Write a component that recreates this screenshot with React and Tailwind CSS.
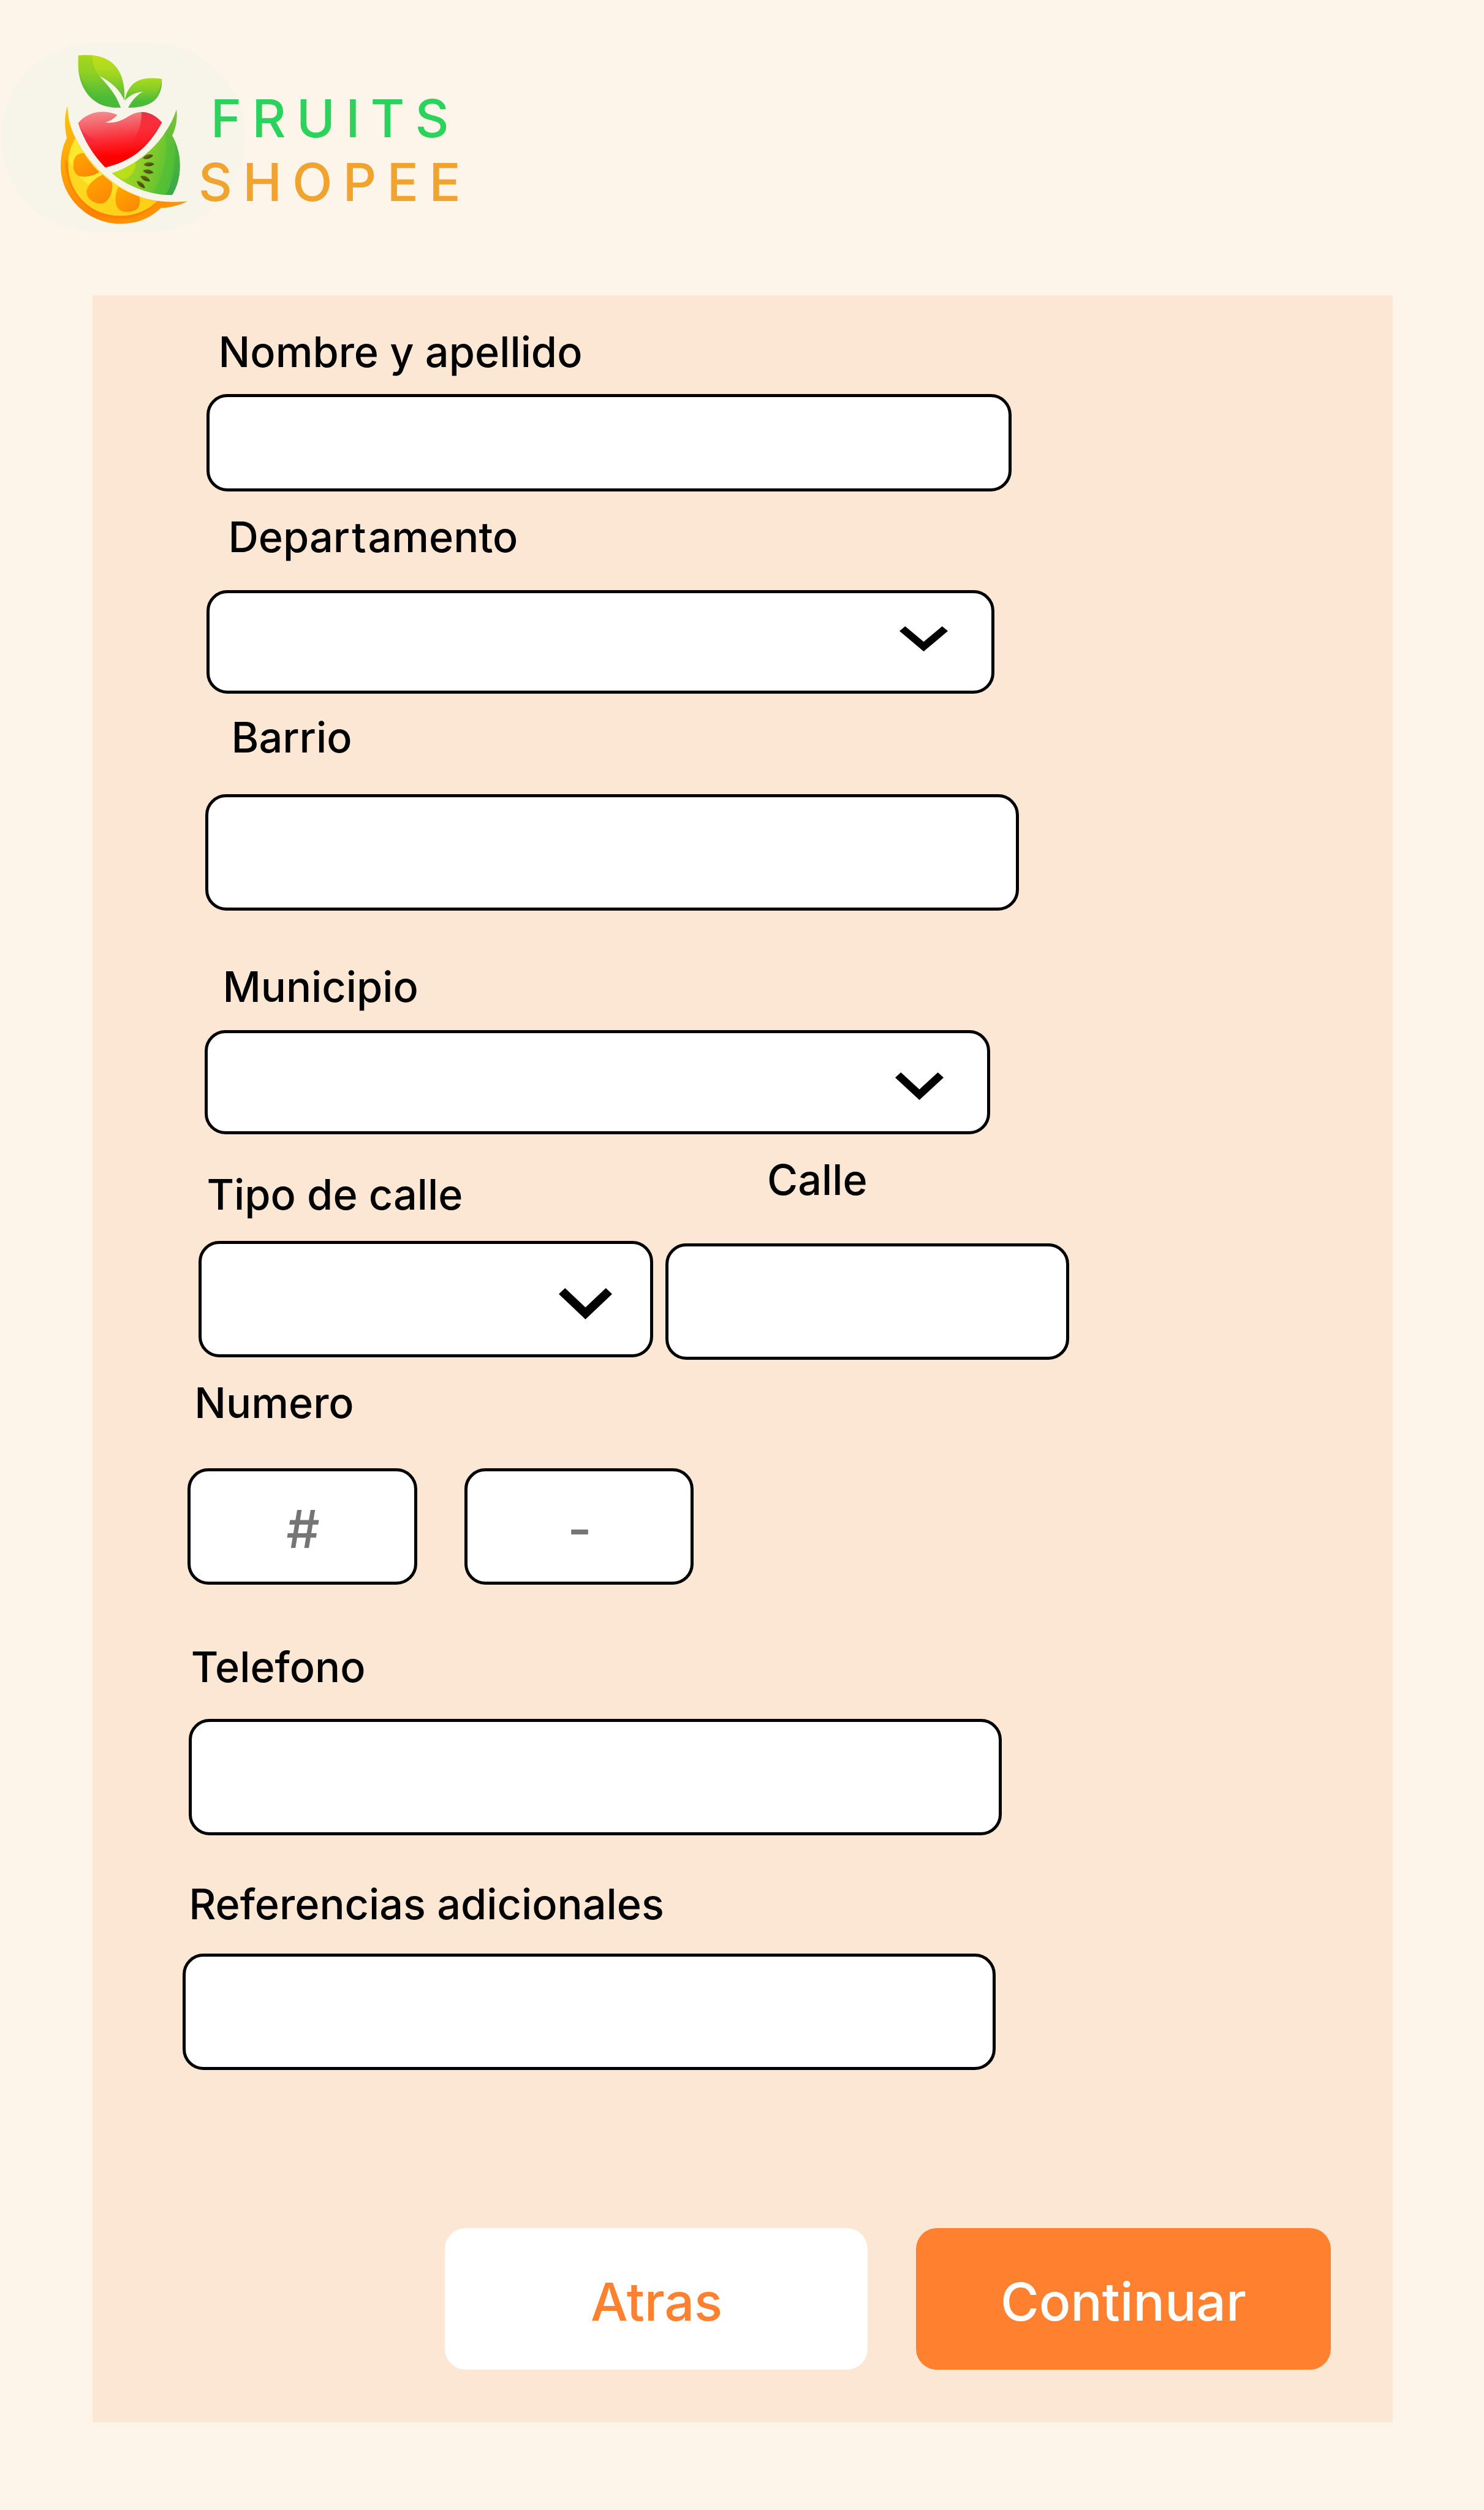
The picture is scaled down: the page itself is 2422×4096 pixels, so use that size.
import React from "react";

const seeds = [
  [847, 719, -13],
  [853, 762, 0],
  [849, 804, 14],
  [832, 844, 31],
  [807, 878, 44],
];

function FruitLogo() {
  return (
    <svg viewBox="330 120 760 1000" className="h-[285px] w-[217px] shrink-0" aria-hidden="true">
      <defs>
        <linearGradient id="leaf" x1="0" y1="0" x2="0" y2="1">
          <stop offset="0" stopColor="#a9d71e" />
          <stop offset="0.35" stopColor="#8fcf25" />
          <stop offset="0.8" stopColor="#4bbb38" />
          <stop offset="1" stopColor="#48b93a" />
        </linearGradient>
        <linearGradient id="leafLight" x1="0" y1="0" x2="0" y2="1">
          <stop offset="0" stopColor="#c3e018" />
          <stop offset="0.35" stopColor="#aad91f" />
          <stop offset="1" stopColor="#4fbc38" />
        </linearGradient>
        <linearGradient id="smallLeafLight" x1="0" y1="0" x2="0" y2="1">
          <stop offset="0" stopColor="#b4dc1a" />
          <stop offset="1" stopColor="#7ccb2b" />
        </linearGradient>
        <linearGradient id="leafShade" x1="0" y1="0" x2="0" y2="1">
          <stop offset="0" stopColor="#6fc62f" stopOpacity="0.5" />
          <stop offset="1" stopColor="#3fb53c" />
        </linearGradient>
        <linearGradient id="apple" x1="0.4" y1="0" x2="0.55" y2="1">
          <stop offset="0" stopColor="#f28b8f" />
          <stop offset="0.22" stopColor="#f4636a" />
          <stop offset="0.5" stopColor="#fb2a33" />
          <stop offset="0.78" stopColor="#ff0000" />
        </linearGradient>
        <linearGradient id="appleSide" x1="0" y1="0" x2="0" y2="1">
          <stop offset="0" stopColor="#dc2440" />
          <stop offset="0.3" stopColor="#fa2634" />
          <stop offset="1" stopColor="#ff0a0e" stopOpacity="0" />
        </linearGradient>
        <linearGradient id="peel" x1="0.1" y1="0" x2="0.5" y2="1">
          <stop offset="0" stopColor="#fcc40f" />
          <stop offset="0.5" stopColor="#ff9e03" />
          <stop offset="0.85" stopColor="#fd8205" />
          <stop offset="1" stopColor="#ff9407" />
        </linearGradient>
        <linearGradient id="pulp" x1="0" y1="0" x2="0.7" y2="1">
          <stop offset="0" stopColor="#ffe62a" />
          <stop offset="0.45" stopColor="#fbec35" />
          <stop offset="1" stopColor="#ffcd14" />
        </linearGradient>
        <linearGradient id="segment" x1="0" y1="0" x2="0.6" y2="1">
          <stop offset="0" stopColor="#ffa800" />
          <stop offset="1" stopColor="#fd8a04" />
        </linearGradient>
        <linearGradient id="kiwi" x1="0" y1="0.4" x2="1" y2="0.75">
          <stop offset="0" stopColor="#b4dc1b" />
          <stop offset="0.45" stopColor="#8fd028" />
          <stop offset="1" stopColor="#45b93a" />
        </linearGradient>
        <linearGradient id="rind" x1="0" y1="0" x2="0" y2="1">
          <stop offset="0" stopColor="#7fc436" />
          <stop offset="0.6" stopColor="#4bba38" />
          <stop offset="1" stopColor="#3aa352" />
        </linearGradient>
        <linearGradient id="seed" x1="0" y1="0" x2="1" y2="1">
          <stop offset="0" stopColor="#77741a" />
          <stop offset="1" stopColor="#353c0c" />
        </linearGradient>
        <clipPath id="leafClip">
          <path d="M448 139C535 130 607 145 655 195C702 245 713 310 713 398C690 345 645 293 568 257C625 315 668 372 691 438C600 443 532 408 490 345C450 283 443 215 448 139Z" />
        </clipPath>
        <clipPath id="smallLeafClip">
          <path d="M927 274C860 263 805 270 768 298C735 325 720 360 715 396C740 370 772 350 818 346C782 366 755 397 733 438C800 440 862 425 895 385C922 350 928 312 927 274Z" />
        </clipPath>
        <clipPath id="appleClip">
          <path d="M447 526C487 478 540 461 590 461C620 462 648 470 671 479C655 500 635 513 600 523C650 528 690 515 720 497C750 478 780 463 812 463C860 465 895 488 927 523C880 610 820 680 750 722C700 752 650 770 603 781C540 720 480 625 447 526Z" />
        </clipPath>
        <clipPath id="pulpClip">
          <path d="M432 612C480 715 560 800 640 860C700 905 790 955 900 973C840 1030 770 1057 690 1057C520 1057 390 930 390 760C390 705 405 655 432 612Z" />
        </clipPath>
        <clipPath id="kiwiClip">
          <path d="M1010 450C1015 500 1008 555 985 597C1015 650 1030 710 1030 770C1030 830 1015 890 985 938C860 940 730 890 640 814C760 775 870 690 940 588C970 545 995 500 1010 450Z" />
        </clipPath>
      </defs>

      <g clipPath="url(#leafClip)">
        <rect x="440" y="130" width="280" height="315" fill="url(#leaf)" />
        <path d="M528 130C528 190 545 230 568 257C640 290 690 340 713 398L725 130Z" fill="url(#leafLight)" />
        <path d="M440 190C465 300 540 390 640 445L440 445Z" fill="url(#leafShade)" opacity="0.6" />
      </g>
      <g clipPath="url(#smallLeafClip)">
        <rect x="710" y="260" width="220" height="180" fill="url(#leaf)" />
        <path d="M735 348C810 345 880 325 930 274L900 255L760 255Z" fill="url(#smallLeafLight)" />
        <path d="M930 274C915 340 890 385 850 440L930 440Z" fill="#48b83a" opacity="0.6" />
      </g>

      <g clipPath="url(#appleClip)">
        <rect x="440" y="455" width="495" height="330" fill="url(#apple)" />
        <path d="M810 455C812 530 795 580 750 640L850 700L940 530L870 455Z" fill="url(#appleSide)" opacity="0.85" />
        <path d="M447 526C465 575 500 605 550 625C520 640 500 640 490 640L440 540Z" fill="#ee2445" opacity="0.5" />
      </g>

      <path
        d="M386 427C388 500 405 560 432 612C480 710 550 790 640 860C700 905 780 955 900 972C960 980 1010 978 1073 974C1030 995 980 1010 921 1013C860 1070 790 1103 690 1103C500 1103 347 950 347 770C347 710 360 655 382 612C370 560 365 490 386 427Z"
        fill="url(#peel)"
      />
      <path
        d="M372 730C365 900 500 1075 690 1075C780 1075 850 1035 900 973C840 1030 770 1057 690 1057C520 1057 390 930 390 760Z"
        fill="#fd7d04"
        opacity="0.65"
      />
      <g clipPath="url(#pulpClip)">
        <rect x="385" y="600" width="520" height="460" fill="url(#pulp)" />
        <path d="M380 700C440 880 640 1010 900 990L900 1060L390 1060Z" fill="#ffd21a" opacity="0.75" />
        <path d="M480 699C440 695 419 725 419 765C419 810 440 834 480 834C510 833 540 825 568 808C535 775 505 738 480 699Z" fill="url(#segment)" />
        <path d="M588 822C610 842 625 855 641 867C650 920 620 987 577 987C530 987 495 955 495 920C497 885 540 842 588 822Z" fill="url(#segment)" />
        <path d="M678 892C715 915 755 933 798 947C808 1000 790 1035 725 1035C680 1035 661 1005 661 960C661 935 668 910 678 892Z" fill="url(#segment)" />
      </g>

      <g clipPath="url(#kiwiClip)">
        <rect x="635" y="445" width="400" height="500" fill="url(#kiwi)" />
        <path d="M640 814L775 735C782 790 755 840 700 850Z" fill="#c0e118" opacity="0.85" />
        <path d="M945 580C962 700 945 830 862 940L990 945L1030 760L980 600Z" fill="#4fbd38" opacity="0.55" />
        <path d="M1012 445L938 590C975 620 992 690 993 760C993 830 975 895 945 940L990 940L1035 880L1035 700L990 590L1020 500Z" fill="url(#rind)" />
        <path d="M985 597C1015 650 1015 880 950 938L990 940L1035 860L1035 700Z" fill="#3dab45" opacity="0.45" />
      </g>
      {seeds.map(([x, y, r]) => (
        <path key={y} d="M-31 3C-18 -14 12 -17 31 -1C14 15 -16 16 -31 3Z" transform={`translate(${x} ${y}) rotate(${r})`} fill="url(#seed)" />
      ))}
    </svg>
  );
}

function Chevron({ className }) {
  return (
    <svg viewBox="0 0 12 7.41" preserveAspectRatio="none" className={className} aria-hidden="true">
      <path d="M1.41 0L6 4.58L10.59 0L12 1.41L6 7.41L0 1.41Z" fill="#000" />
    </svg>
  );
}

function Label({ className, children }) {
  return <label className={`block whitespace-nowrap text-[68.42px] leading-[83px] font-medium text-black ${className}`}>{children}</label>;
}

function Field({ className, children }) {
  return <div className={`flex items-start rounded-[34px] border-[5px] border-black bg-white ${className}`}>{children}</div>;
}

export default function App() {
  return (
    <div className="flex h-[4096px] w-[2422px] flex-col overflow-hidden bg-[#fdf4ea] font-['Inter',sans-serif]">
      <header className="relative flex h-[482px] shrink-0 items-start pl-[94px]">
        <div className="absolute top-[70px] left-px h-[308px] w-[399px] rounded-full bg-[#f7f5ea]" />
        <div className="relative flex items-start gap-[12.8px] pt-[85px]">
          <FruitLogo />
          <h1 className="flex flex-col pt-14 text-[85.52px] leading-[104px] font-medium tracking-[17.1px] whitespace-nowrap">
            <span className="pl-5 text-[#2bd35c]">FRUITS</span>
            <span className="text-[#f0a32e]">SHOPEE</span>
          </h1>
        </div>
      </header>

      <main className="ml-[151px] flex h-[3471px] w-[2122px] shrink-0 flex-col bg-[#fce7d4]">
        <Label className="mt-[51px] ml-[205.6px]">Nombre y apellido</Label>
        <Field className="mt-[27px] ml-[186px] h-[159px] w-[1314px]" />

        <Label className="mt-[33px] ml-[221.4px]">
          Depa<span className="tracking-[2.9px]">rt</span>amento
        </Label>
        <Field className="mt-[45px] ml-[186px] h-[169px] w-[1286px] justify-end pt-[54px] pr-[71px]">
          <Chevron className="h-[41px] w-[79px]" />
        </Field>

        <Label className="mt-[30px] ml-[226.5px]">Barrio</Label>
        <Field className="mt-[51px] ml-[184px] h-[190px] w-[1328px]" />

        <Label className="mt-[83px] ml-[212.4px]">Municipio</Label>
        <Field className="mt-[29px] ml-[183px] h-[170px] w-[1282px] justify-end pt-[64px] pr-[71px]">
          <Chevron className="h-[45px] w-[79px]" />
        </Field>

        <div className="ml-[173px] flex gap-5">
          <div className="w-[742px]">
            <Label className="mt-[57px] ml-[13.4px]">Tipo de calle</Label>
            <Field className="mt-[34px] h-[190px] w-full justify-end pt-[72px] pr-[62px]">
              <Chevron className="h-[51px] w-[87px]" />
            </Field>
          </div>
          <div className="w-[659px]">
            <Label className="mt-[33px] ml-[166px]">Calle</Label>
            <Field className="mt-[62px] h-[190px] w-full" />
          </div>
        </div>

        <Label className="mt-[29px] ml-[166.3px]">Numero</Label>
        <div className="mt-[65px] ml-[155px] flex gap-[77px] text-[85.52px] leading-[104px] font-medium text-[#757575]">
          <Field className="h-[190px] w-[375px] justify-center pt-[42px] pl-[2px]">#</Field>
          <Field className="h-[190px] w-[374px] justify-center pt-[42px] pl-[2px]">-</Field>
        </div>

        <Label className="mt-[93px] ml-[160.7px]">Telefono</Label>
        <Field className="mt-[43px] ml-[157px] h-[190px] w-[1327px]" />

        <Label className="mt-[71px] ml-[157.2px]">Referencias adicionales</Label>
        <Field className="mt-[39px] ml-[147px] h-[190px] w-[1327px]" />

        <div className="mt-[258px] ml-[575px] flex gap-[79px] text-[85.52px] leading-[104px] font-medium">
          <button className="flex h-[231px] w-[690px] items-start justify-center rounded-[34px] bg-white pt-[68px] pl-px text-[#ff802e]">Atras</button>
          <button className="flex h-[231px] w-[677px] items-start justify-center rounded-[34px] bg-[#ff802e] pt-[68px] text-white">Continuar</button>
        </div>
      </main>
    </div>
  );
}
